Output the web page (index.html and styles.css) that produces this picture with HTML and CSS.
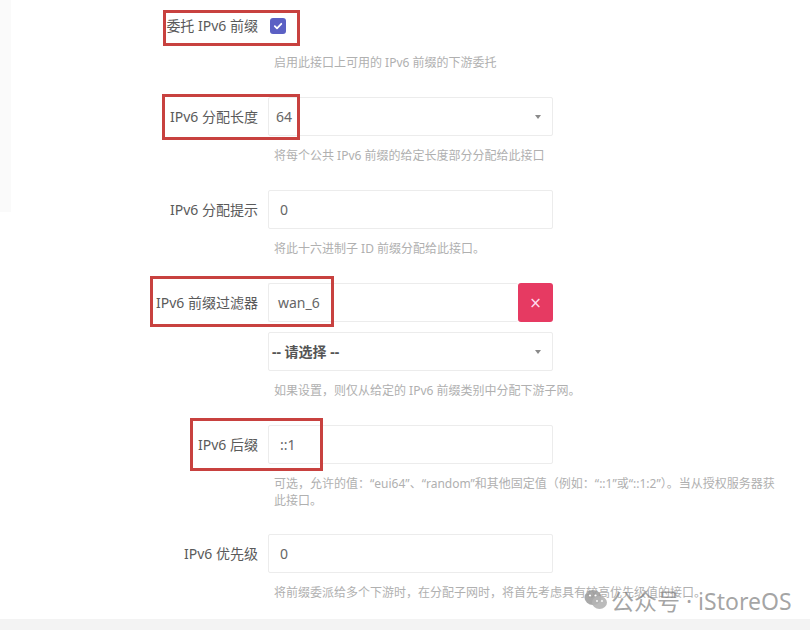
FILE: index.html
```html
<!DOCTYPE html>
<html lang="zh-CN">
<head>
  <meta charset="UTF-8" />
  <title>接口 – IPv6 设置</title>
  <meta name="viewport" content="width=device-width, initial-scale=1" />
  <link rel="stylesheet" href="styles.css">
</head>
<body>
  <div class="page">
    <div class="side"></div>

    <div class="form">
      <!-- 委托 -->
      <div class="row">
        <div class="label short">委托 IPv6 前缀</div>
        <div class="field">
          <div class="control-line short">
            <span class="checkbox">
              <svg width="10" height="10" viewBox="0 0 10 10"><polyline points="1.8,5.2 4,7.3 8.3,2.8" fill="none" stroke="#fff" stroke-width="1.8" stroke-linecap="round" stroke-linejoin="round"/></svg>
            </span>
          </div>
          <div class="help">启用此接口上可用的 IPv6 前缀的下游委托</div>
        </div>
      </div>

      <!-- 分配长度 -->
      <div class="row">
        <div class="label">IPv6 分配长度</div>
        <div class="field">
          <div class="select">64<span class="caret"></span></div>
          <div class="help">将每个公共 IPv6 前缀的给定长度部分分配给此接口</div>
        </div>
      </div>

      <!-- 分配提示 -->
      <div class="row">
        <div class="label">IPv6 分配提示</div>
        <div class="field">
          <div class="input">0</div>
          <div class="help">将此十六进制子 ID 前缀分配给此接口。</div>
        </div>
      </div>

      <!-- 前缀过滤器 -->
      <div class="row row-filter">
        <div class="label">IPv6 前缀过滤器</div>
        <div class="field">
          <div class="input-group">
            <div class="input">wan_6</div>
            <button class="btn-remove">×</button>
          </div>
          <div class="select bold">-- 请选择 --<span class="caret"></span></div>
          <div class="help">如果设置，则仅从给定的 IPv6 前缀类别中分配下游子网。</div>
        </div>
      </div>

      <!-- 后缀 -->
      <div class="row">
        <div class="label">IPv6 后缀</div>
        <div class="field">
          <div class="input">::1</div>
          <div class="help nowrap">可选，允许的值：“eui64”、“random”和其他固定值（例如：“::1”或“::1:2”）。当从授权服务器获<br>此接口。</div>
        </div>
      </div>

      <!-- 优先级 -->
      <div class="row">
        <div class="label">IPv6 优先级</div>
        <div class="field">
          <div class="input">0</div>
          <div class="help">将前缀委派给多个下游时，在分配子网时，将首先考虑具有较高优先级值的接口。</div>
        </div>
      </div>
    </div>

    <div class="foot"></div>

    <!-- 标注框 -->
    <div class="mark mark-1"></div>
    <div class="mark mark-2"></div>
    <div class="mark mark-3"></div>
    <div class="mark mark-4"></div>

    <!-- 水印 -->
    <div class="watermark">
      <svg width="24" height="22" viewBox="0 0 24 22">
        <ellipse cx="9" cy="8.5" rx="8.5" ry="7.5" fill="#9a9a9a" opacity="0.85"/>
        <ellipse cx="15.5" cy="13.5" rx="7.5" ry="6.5" fill="#b4b4b4" opacity="0.9"/>
        <circle cx="6" cy="6.5" r="1.1" fill="#fff"/>
        <circle cx="11.5" cy="6.5" r="1.1" fill="#fff"/>
        <circle cx="13" cy="12" r="0.9" fill="#fff"/>
        <circle cx="18" cy="12" r="0.9" fill="#fff"/>
      </svg>
      <span>公众号 · iStoreOS</span>
    </div>
  </div>
</body>
</html>
```

FILE: styles.css
```css
html, body {
  margin: 0; padding: 0;
  background: #fff;
  overflow: hidden;
}
body {
  font-family: "Noto Sans", "Noto Sans CJK SC", sans-serif;
  color: #555;
}

.page {
  position: relative;
  width: 810px;
  height: 630px;
  overflow: hidden;
}

.side {
  position: absolute;
  left: 0; top: 0;
  width: 11px;
  height: 212px;
  background: #fafafa;
}

/* --- Form --- */
.form {
  padding-top: 9px;
}
.row {
  display: grid;
  grid-template-columns: 258px 285px;
  column-gap: 10px;
  margin-bottom: 25px;
}
.row-filter {
  margin-top: 2px;
}
.label {
  text-align: right;
  font-size: 14px;
  line-height: 39px;
  color: #5a5a5a;
  white-space: nowrap;
}
.label.short {
  line-height: 34px;
}
.field {
  min-width: 0;
}
.control-line {
  height: 39px;
  display: flex;
  align-items: center;
}
.control-line.short {
  height: 34px;
}
.checkbox {
  width: 16px;
  height: 16px;
  margin-left: 2px;
  border-radius: 3px;
  background: #5b60c4;
  display: flex;
  align-items: center;
  justify-content: center;
}

.input, .select {
  box-sizing: border-box;
  height: 39px;
  border: 1px solid #ececec;
  border-radius: 2px;
  padding: 0 11px;
  font-size: 14px;
  line-height: 37px;
  color: #666;
  background: #fff;
}
.select {
  position: relative;
  padding-left: 7px;
}
.select.bold {
  font-weight: bold;
  color: #555;
  margin-top: 10px;
  padding-left: 3px;
}
.caret {
  position: absolute;
  right: 11px;
  top: 17px;
  border-left: 3px solid transparent;
  border-right: 3px solid transparent;
  border-top: 4px solid #8a8a8a;
}

.input-group {
  display: flex;
}
.input-group .input {
  flex: 1;
  border-right: none;
  padding-left: 9px;
}
.btn-remove {
  width: 35px;
  height: 39px;
  border: none;
  border-radius: 3px;
  background: #e63a62;
  color: #fde;
  font-size: 15px;
  font-family: "DejaVu Sans", sans-serif;
  padding: 0;
}

.help {
  width: 560px;
  margin-top: 11px;
  padding-left: 6px;
  font-size: 12px;
  line-height: 18px;
  color: #b0b0b0;
}
.help.nowrap {
  width: auto;
  white-space: nowrap;
  line-height: 17px;
}

.foot {
  position: absolute;
  left: 0; right: 0; bottom: 0;
  height: 11px;
  background: #f3f3f3;
}

/* --- Annotation boxes --- */
.mark {
  position: absolute;
  box-sizing: border-box;
  border: 3px solid #c8413f;
}
.mark-1 { left: 163px; top: 10px; width: 137px; height: 36px; }
.mark-2 { left: 162px; top: 94px; width: 138px; height: 46px; }
.mark-3 { left: 150px; top: 276px; width: 184px; height: 51px; }
.mark-4 { left: 190px; top: 418px; width: 133px; height: 53px; }

/* --- Watermark --- */
.watermark {
  position: absolute;
  left: 584px;
  top: 583px;
  display: flex;
  align-items: center;
  gap: 3px;
  color: rgba(125, 125, 125, 0.7);
  font-size: 23px;
  white-space: nowrap;
}
```
